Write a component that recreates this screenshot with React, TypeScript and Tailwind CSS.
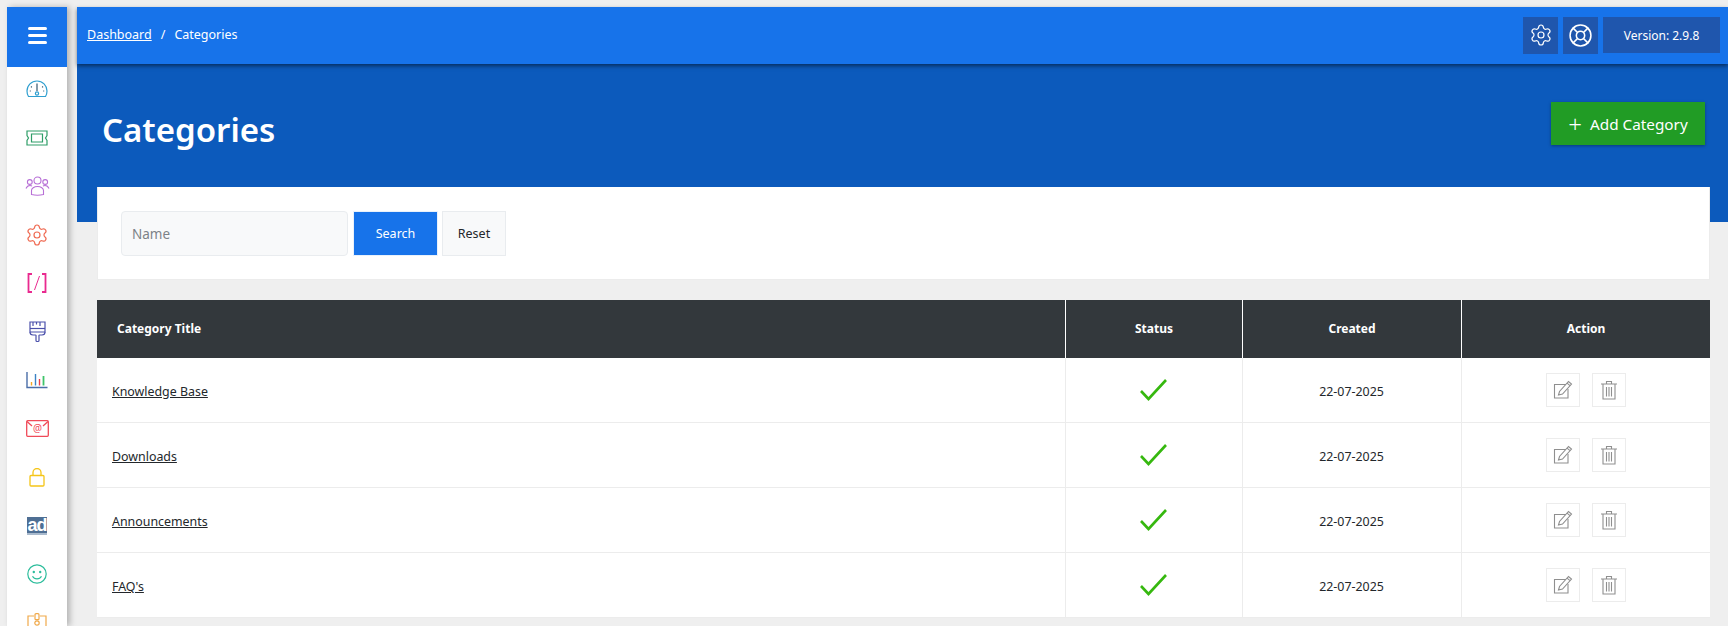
import type { ReactNode } from 'react';
import { LifeBuoy, Settings } from 'lucide-react';

const font = { fontFamily: '"Noto Sans", sans-serif' };

const categories = ['Knowledge Base', 'Downloads', 'Announcements', "FAQ's"];

function GaugeIcon() {
  return (
    <svg width="22" height="18" viewBox="0 0 22 18" fill="none" stroke="#2f9fd0" strokeWidth="1.2">
      <path d="M2.5 16.5C1.5 15 1 13 1 11a10 10 0 0 1 20 0c0 2-.5 4-1.5 5.5z" />
      <path d="M11 3.500v7.500" stroke="#33566f" />
      <circle cx="11" cy="13.5" r="1.6" />
      <path d="M5 6.500l.8.8M17 6.500l-.8.8M3.800 11h1M17.200 11h1" stroke="#33566f" />
    </svg>
  );
}

function TicketIcon() {
  return (
    <svg width="22" height="16" viewBox="0 0 22 16" fill="none" stroke="#2f9e68" strokeWidth="1.2">
      <path d="M1 1h20v4.500l-1.500 2.500 1.500 2.500V15H1v-4.500L2.500 8 1 5.500z" />
      <path d="M5.500 4h11v8h-11z" />
    </svg>
  );
}

function UsersIcon() {
  return (
    <svg width="25" height="20" viewBox="0 0 25 20" fill="none" stroke="#b76fd6" strokeWidth="1.1">
      <circle cx="12.5" cy="4.5" r="3.5" />
      <circle cx="4.8" cy="6" r="2.4" />
      <circle cx="20.2" cy="6" r="2.4" />
      <path d="M6.500 18.500v-4c0-2 2.500-4 6-4s6 2 6 4v4c-3 .7-9 .7-12 0z" />
      <path d="M1 12.5c.8-2 2.5-3 4-3 .8 0 1.5.2 2 .5M24 12.5c-.8-2-2.500-3-4-3-.8 0-1.500.2-2 .5" />
    </svg>
  );
}

function BracketIcon() {
  return (
    <svg width="20" height="20" viewBox="0 0 20 20" fill="none" stroke="#e92a8f" strokeWidth="1.8">
      <path d="M5 1H1.500v18H5M15 1h3.500v18H15" />
      <path d="M12.500 3L7.500 17" strokeWidth="1" />
    </svg>
  );
}

function BrushIcon() {
  return (
    <svg width="17" height="22" viewBox="0 0 17 22" fill="none" stroke="#4b50ab" strokeWidth="1.2">
      <path d="M1 1h15v10H1z" />
      <path d="M4 1v4M7.500 1v2.500M11 1v4" />
      <path d="M1 7.500h15" />
      <path d="M1 11c0 2 1.500 3 3 3h2.500c.8 0 .5 1 .5 2v3.500c0 .6.500 1 1 1h1c.5 0 1-.4 1-1V16c0-1-.3-2 .5-2H13c1.500 0 3-1 3-3" />
    </svg>
  );
}

function ChartIcon() {
  return (
    <svg width="22" height="17" viewBox="0 0 22 17" fill="none" strokeWidth="1.400">
      <path d="M1 0v15.500h20.500" stroke="#4a6ea8" />
      <path d="M5.500 13.500V10" stroke="#f5a623" />
      <path d="M9.500 13.500V2" stroke="#3b82c4" />
      <path d="M13.500 13.500V7" stroke="#e8404a" />
      <path d="M17.500 13.500V4" stroke="#3fc46a" strokeWidth="1.800" />
    </svg>
  );
}

function MailIcon() {
  return (
    <svg width="23" height="17" viewBox="0 0 23 17" fill="none" stroke="#f04a58" strokeWidth="1.300">
      <rect x="0.700" y="0.700" width="21.600" height="15.600" rx="1" />
      <path d="M1 1.500l5 4.500M22 1.500l-5 4.500" />
      <text x="11.500" y="12" textAnchor="middle" fontSize="10" fill="#f04a58" stroke="none">@</text>
    </svg>
  );
}

function LockIcon() {
  return (
    <svg width="16" height="19" viewBox="0 0 16 19" fill="none" stroke="#f5c518" strokeWidth="1.300">
      <rect x="1" y="7.500" width="14" height="10.500" rx="1" />
      <path d="M4 7.500V4.500a4 4 0 0 1 8 0v3" />
    </svg>
  );
}

function AdIcon() {
  return (
    <div className="w-[20px] h-[18px] bg-[#4f6f94] text-white flex items-center justify-center text-[18px] font-bold leading-none tracking-[-1px] border-b-2 border-[#a9bacd]" style={{ fontFamily: '"Liberation Sans", sans-serif' }}>
      ad
    </div>
  );
}

function SmileIcon() {
  return (
    <svg width="20" height="20" viewBox="0 0 20 20" fill="none" stroke="#2dbd9c" strokeWidth="1.200">
      <circle cx="10" cy="10" r="9.200" />
      <circle cx="6.800" cy="8" r="0.600" />
      <circle cx="13.200" cy="8" r="0.600" />
      <path d="M5.500 12.200c1 1.800 2.700 2.600 4.500 2.600s3.500-.8 4.500-2.600" />
    </svg>
  );
}

function BadgeIcon() {
  return (
    <svg width="20" height="20" viewBox="0 0 20 20" fill="none" stroke="#f0a94a" strokeWidth="1.200">
      <path d="M7 3H1v16h18V3h-6" />
      <rect x="8" y="0.700" width="4" height="6" rx="1" />
      <circle cx="10" cy="10" r="2.200" />
    </svg>
  );
}

function EditIcon() {
  return (
    <svg width="20" height="20" viewBox="0 0 20 20" fill="none" stroke="#8f8f8f" strokeWidth="1.100">
      <path d="M13 4.500H1.500v13.500h13.500V9" />
      <path d="M5.500 15l1-3.500L15.500 1.500l3 2.500-9 10z" />
      <path d="M14 3.200l3 2.500" />
    </svg>
  );
}

function TrashIcon() {
  return (
    <svg width="18" height="20" viewBox="0 0 18 20" fill="none" stroke="#8f8f8f" strokeWidth="1.100">
      <path d="M1 4h16M6.500 4V1.500h5V4" />
      <path d="M3 4v15h12V4" />
      <path d="M6.500 7v9.500M9 7v9.500M11.500 7v9.500" />
    </svg>
  );
}

function Check() {
  return (
    <svg width="27" height="22" viewBox="0 0 27 22" fill="none" stroke="#36b80f" strokeWidth="2.600">
      <path d="M1 12l7.500 8L26 1" />
    </svg>
  );
}

function NavItem({ children }: { children: ReactNode }) {
  return <div className="h-[48.5px] flex items-center justify-center shrink-0">{children}</div>;
}

function Sidebar() {
  return (
    <aside className="w-[60px] shrink-0 bg-white shadow-[3px_0_6px_rgba(0,0,0,0.25)] z-20 flex flex-col items-center">
      <div className="w-full h-[60px] bg-[#1773ea] flex flex-col items-center justify-center gap-[4px] shrink-0 pb-[3px]">
        <span className="w-[19px] h-[3px] rounded-sm bg-white" />
        <span className="w-[19px] h-[3px] rounded-sm bg-white" />
        <span className="w-[19px] h-[3px] rounded-sm bg-white" />
      </div>
      <div className="flex flex-col items-center -mt-[2px]">
        <NavItem><GaugeIcon /></NavItem>
        <NavItem><TicketIcon /></NavItem>
        <NavItem><UsersIcon /></NavItem>
        <NavItem>
          <Settings className="w-[24px] h-[24px] text-[#ef6a52]" strokeWidth={1.2} />
        </NavItem>
        <NavItem><BracketIcon /></NavItem>
        <NavItem><BrushIcon /></NavItem>
        <NavItem><ChartIcon /></NavItem>
        <NavItem><MailIcon /></NavItem>
        <NavItem><LockIcon /></NavItem>
        <NavItem><AdIcon /></NavItem>
        <NavItem><SmileIcon /></NavItem>
        <NavItem><BadgeIcon /></NavItem>
      </div>
    </aside>
  );
}

function Topbar() {
  return (
    <div className="h-[57px] bg-[#1773ea] shadow-[0_2px_4px_rgba(0,0,0,0.5)] z-10 relative flex items-center justify-between pl-[10px] pr-[8px] text-white">
      <div className="flex items-center text-[12.5px]">
        <span className="underline">Dashboard</span>
        <span className="mx-[9px]">/</span>
        <span>Categories</span>
      </div>
      <div className="flex items-center gap-[5px] pb-[1px]">
        <div className="w-[35px] h-[37px] bg-[#1f56ad] flex items-center justify-center">
          <Settings className="w-[24px] h-[24px]" strokeWidth={1.2} />
        </div>
        <div className="w-[35px] h-[37px] bg-[#1f56ad] flex items-center justify-center">
          <LifeBuoy className="w-[25px] h-[25px]" strokeWidth={1.5} />
        </div>
        <div className="w-[117px] h-[36px] bg-[#1f56ad] flex items-center justify-center text-[12px] pt-[2px]">
          Version: 2.9.8
        </div>
      </div>
    </div>
  );
}

function Hero() {
  return (
    <div className="h-[158px] bg-[#0c5abc] flex items-start justify-between pl-[25px] pr-[23px] text-white">
      <h1 className="text-[33px] font-semibold leading-[44px] mt-[44px]">Categories</h1>
      <button className="mt-[38px] w-[154px] h-[43px] bg-[#219c25] shadow-[0_1px_3px_rgba(0,0,0,0.35)] flex items-center justify-center gap-[8px] text-[15.3px] pt-[1px]">
        <span className="text-[24px] leading-none font-light">+</span>
        Add Category
      </button>
    </div>
  );
}

function SearchCard() {
  return (
    <div className="-mt-[35px] relative bg-white border border-[#ececec] border-t-0 h-[93px] flex items-center pl-[23px]">
      <div className="w-[227px] h-[45px] bg-[#f8f9fa] border border-[#e9ecef] rounded-[4px] flex items-center pl-[10px] pt-[2px] text-[13.5px] text-[#7c8288]">
        Name
      </div>
      <button className="ml-[5px] w-[85px] h-[45px] pt-[2px] bg-[#1773ea] border border-[#e9f1fb] text-white text-[12.5px]">Search</button>
      <button className="ml-[4px] w-[64px] h-[45px] pt-[2px] bg-[#f8f9fa] border border-[#e9ecef] text-[#23272b] text-[12.5px]">Reset</button>
    </div>
  );
}

function CategoryTable() {
  return (
    <table className="mt-[20px] w-[1613px] table-fixed border-separate border-spacing-0 text-[12.4px] bg-white">
      <colgroup>
        <col className="w-[968px]" />
        <col className="w-[177px]" />
        <col className="w-[219px]" />
        <col className="w-[249px]" />
      </colgroup>
      <thead>
        <tr className="h-[58px] bg-[#33383c] text-white text-[12px] font-bold">
          <th className="text-left pl-[20px] font-bold">Category Title</th>
          <th className="border-l border-white font-bold">Status</th>
          <th className="border-l border-white font-bold">Created</th>
          <th className="border-l border-white font-bold">Action</th>
        </tr>
      </thead>
      <tbody>
        {categories.map((name) => (
          <tr key={name} className="h-[65px] text-[#23272b]">
            <td className="pl-[15px] pt-[5px] border-b border-[#ececec]"><span className="underline">{name}</span></td>
            <td className="border-l border-b border-[#ececec] pr-[1px]">
              <div className="flex justify-center"><Check /></div>
            </td>
            <td className="border-l border-b border-[#ececec] text-center pt-[5px] pr-[1px]">22-07-2025</td>
            <td className="border-l border-b border-[#ececec]">
              <div className="flex justify-center gap-[12px]">
                <div className="w-[34px] h-[34px] border border-[#ececec] flex items-center justify-center"><EditIcon /></div>
                <div className="w-[34px] h-[34px] border border-[#ececec] flex items-center justify-center"><TrashIcon /></div>
              </div>
            </td>
          </tr>
        ))}
      </tbody>
    </table>
  );
}

export default function App() {
  return (
    <div className="h-[626px] overflow-hidden bg-[#efefef] flex pt-[7px] pl-[7px] gap-[10px]" style={font}>
      <Sidebar />
      <main className="flex-1 min-w-0">
        <Topbar />
        <Hero />
        <div className="pl-[20px]">
          <div className="w-[1613px]">
            <SearchCard />
            <CategoryTable />
          </div>
        </div>
      </main>
    </div>
  );
}
